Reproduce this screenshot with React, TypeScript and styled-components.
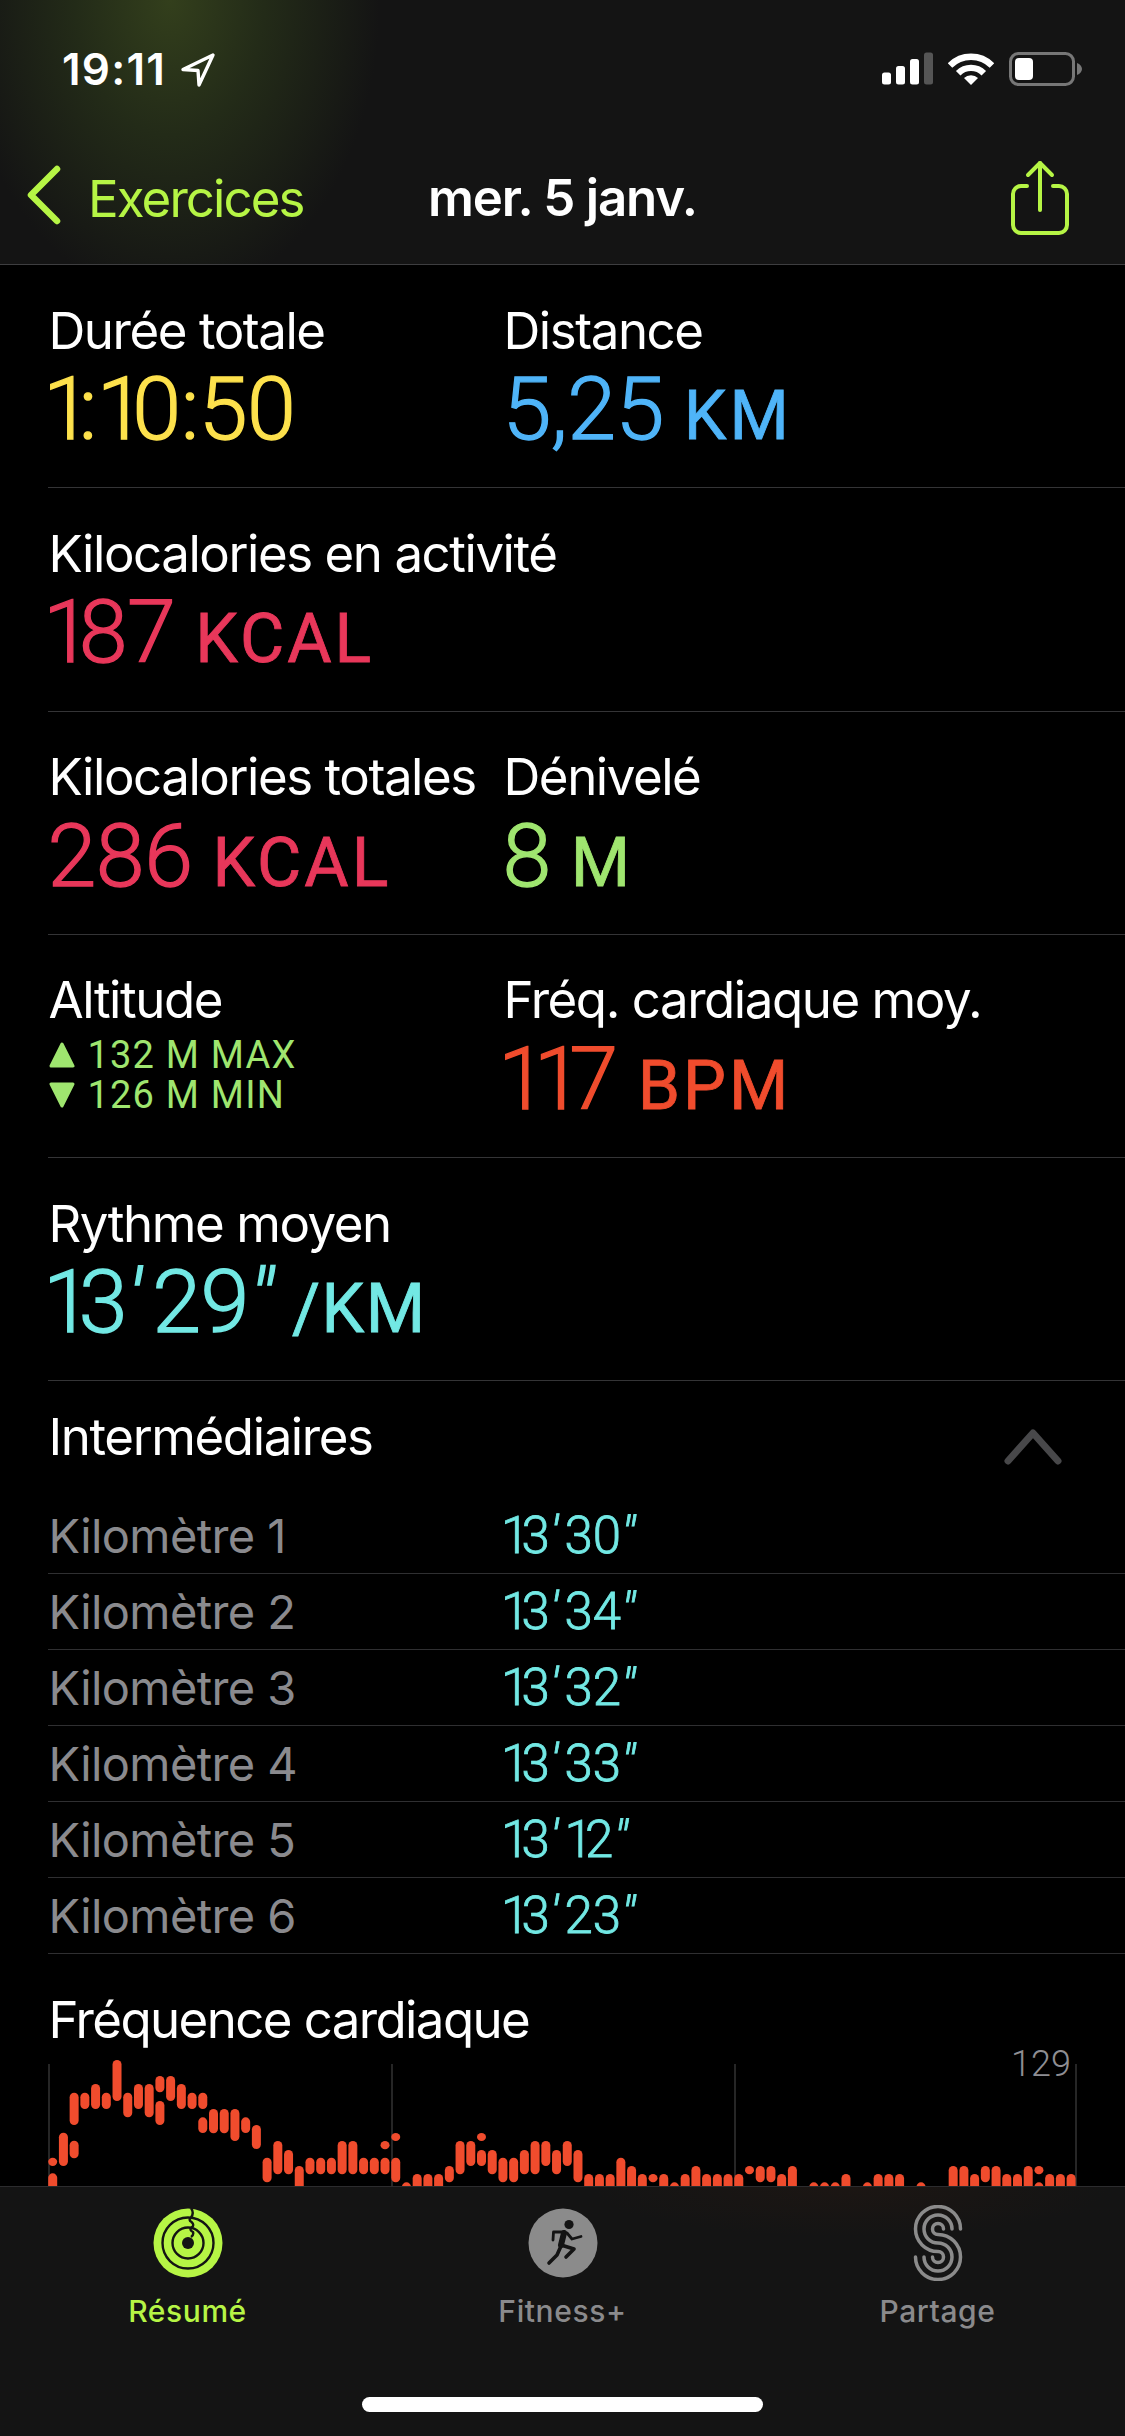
import React from "react";
import styled, { createGlobalStyle } from "styled-components";

const LIME = "#b6f545";
const GREEN = "#9fe56f";
const CYAN = "#72e8e4";
const RED = "#e8375a";
const TEXT_FONT = `"Inter", "Liberation Sans", sans-serif`;
const NUM_FONT = `"Roboto", "Inter", sans-serif`;

const Global = createGlobalStyle`
  html, body { margin: 0; padding: 0; background: #000; }
  body { font-family: ${TEXT_FONT}; -webkit-font-smoothing: antialiased; }
`;

const Page = styled.div`
  width: 1125px;
  height: 2436px;
  display: flex;
  flex-direction: column;
  overflow: hidden;
  background: #000;
  color: #fff;
`;

const Header = styled.header`
  height: 265px;
  flex: none;
  box-sizing: border-box;
  border-bottom: 1.5px solid #3e3e40;
  background: radial-gradient(ellipse 210px 300px at 170px 0, #333f1c 0%, #232b18 45%, rgba(20, 20, 20, 0) 100%), #141414;
`;

const StatusBar = styled.div`
  height: 135px;
  display: flex;
  justify-content: space-between;
  align-items: flex-start;
  padding: 52px 43px 0 62px;
  box-sizing: border-box;
`;

const StatusLeft = styled.div`
  display: flex;
  align-items: flex-start;
  gap: 14px;
`;

const Time = styled.span`
  font-size: 44px;
  line-height: 34px;
  font-weight: 600;
  letter-spacing: 1.2px;
`;

const StatusRight = styled.div`
  display: flex;
  align-items: flex-start;
  gap: 15px;
`;

const NavRow = styled.nav`
  display: grid;
  grid-template-columns: 1fr auto 1fr;
  align-items: flex-start;
`;

const BackLink = styled.div`
  display: flex;
  align-items: flex-start;
  gap: 26px;
  padding-left: 26px;
  color: ${LIME};
  font-size: 51px;
  line-height: 60px;
  letter-spacing: -1.9px;
`;

const NavTitle = styled.h1`
  margin: 0;
  font-size: 51px;
  line-height: 60px;
  font-weight: 600;
  letter-spacing: -1.2px;
  padding-top: 33px;
`;

const BackLabel = styled.span`
  padding-top: 34px;
`;

const ShareButton = styled.div`
  display: flex;
  justify-content: flex-end;
  padding: 25px 55px 0 0;
`;

const BackIcon = styled.svg`
  margin-top: 30px;
`;

const Main = styled.main`
  flex: 1;
  min-height: 0;
  overflow: hidden;
  background: #000;
`;

const MetricRow = styled.section`
  height: 223.3px;
  box-sizing: border-box;
  margin-left: 48px;
  padding: 35.5px 0 0 0.5px;
  border-bottom: 1.5px solid #343436;
  display: grid;
  grid-template-columns: 455px 1fr;
`;

const Label = styled.div`
  font-size: 51px;
  line-height: 60px;
  letter-spacing: -1.45px;
  white-space: nowrap;
`;

const Value = styled.div<{ $color: string }>`
  color: ${(p) => p.$color};
  font-family: ${NUM_FONT};
  font-size: 88px;
  line-height: 90px;
  font-weight: 300;
  -webkit-text-stroke: 1.3px ${(p) => p.$color};
  margin: 3.5px 0 0 -1px;
  letter-spacing: -0.5px;
  white-space: nowrap;
`;

const Unit = styled.span<{ $tight?: boolean }>`
  font-size: 68px;
  font-weight: 400;
  -webkit-text-stroke-width: 0.8px;
  letter-spacing: ${(p) => (p.$tight ? "1.5px" : "3px")};
  margin-left: ${(p) => (p.$tight ? "8px" : "20px")};
`;

const One = styled.span<{ $first?: boolean }>`
  letter-spacing: -0.15em;
  margin-left: ${(p) => (p.$first ? "-0.05em" : "0")};
`;

const Prime = styled.span`
  font-style: italic;
  letter-spacing: 0.12em;
`;

const AltitudeList = styled.div`
  margin-top: 5px;
  display: flex;
  flex-direction: column;
`;

const AltitudeLine = styled.div`
  display: flex;
  align-items: center;
  gap: 13px;
  color: ${GREEN};
  font-family: ${NUM_FONT};
  font-size: 38px;
  line-height: 40px;
  letter-spacing: 1.2px;
`;

const SplitsHeader = styled.div`
  height: 116.5px;
  box-sizing: border-box;
  padding: 26px 63px 0 48.5px;
  display: flex;
  justify-content: space-between;
  align-items: flex-start;
`;

const SplitsTitle = styled.div`
  font-size: 51px;
  line-height: 60px;
  letter-spacing: -1.4px;
`;

const Chevron = styled.svg`
  margin-top: 22px;
`;

const SplitRow = styled.div`
  height: 76px;
  box-sizing: border-box;
  margin-left: 48px;
  padding-left: 0.5px;
  border-bottom: 1.5px solid #2f2f31;
  display: grid;
  grid-template-columns: 455px 1fr;
  align-items: center;
  font-size: 47px;
`;

const SplitName = styled.span`
  color: #8a8a8e;
  letter-spacing: -0.6px;
`;

const SplitTime = styled.span`
  color: ${CYAN};
  font-family: ${NUM_FONT};
  font-size: 51px;
  font-weight: 300;
  -webkit-text-stroke: 0.8px ${CYAN};
`;

const HeartTitle = styled.div`
  padding: 36px 0 0 48.5px;
  font-size: 51px;
  line-height: 60px;
  letter-spacing: -1.6px;
`;

const Chart = styled.div`
  position: relative;
  height: 136px;
`;

const ChartMax = styled.span`
  position: absolute;
  right: 54px;
  top: -6px;
  color: #8e8e93;
  font-family: ${NUM_FONT};
  font-size: 36px;
  line-height: 40px;
  font-weight: 300;
`;

const ChartSvg = styled.svg`
  display: block;
`;

const TabBar = styled.footer`
  height: 250px;
  flex: none;
  box-sizing: border-box;
  border-top: 1.5px solid #2c2c2e;
  background: radial-gradient(ellipse 260px 50px at 850px 0, #1c1613 0%, rgba(20, 20, 20, 0) 100%), #141414;
  display: flex;
  flex-direction: column;
`;

const Tabs = styled.div`
  display: grid;
  grid-template-columns: repeat(3, 375px);
  padding-top: 18px;
`;

const Tab = styled.div<{ $active?: boolean }>`
  display: flex;
  flex-direction: column;
  align-items: center;
  color: ${(p) => (p.$active ? LIME : "#8a8a8c")};
  font-size: 30px;
  line-height: 36px;
  font-weight: 500;
  letter-spacing: 0.6px;
`;

const TabIcon = styled.div`
  height: 76px;
  display: flex;
  align-items: center;
  justify-content: center;
  margin-bottom: 12px;
`;

const HomeBar = styled.div`
  width: 401px;
  height: 15px;
  border-radius: 8px;
  background: #fff;
  margin: auto auto 24px;
`;

const numerals = (text: string) =>
  Array.from(text).map((c, i) => {
    if (c === "1") return <One key={i} $first={i === 0}>1</One>;
    if (c === "′" || c === "″") return <Prime key={i}>{c}</Prime>;
    return c;
  });

const LocationIcon = () => (
  <svg width="36" height="36" viewBox="0 0 36 36">
    <path d="M33 3 L3 17.5 L18 18.5 L19 33 Z" fill="none" stroke="#fff" strokeWidth="3.4" strokeLinejoin="round" />
  </svg>
);

const SignalIcon = () => (
  <svg width="51" height="33" viewBox="0 0 51 33">
    <rect x="0" y="20.5" width="9" height="12" rx="2.5" fill="#fff" />
    <rect x="14" y="14" width="9" height="18.5" rx="2.5" fill="#fff" />
    <rect x="28" y="7" width="9" height="25.5" rx="2.5" fill="#fff" />
    <rect x="42" y="0.5" width="9" height="32" rx="2.5" fill="#555" />
  </svg>
);

const WifiIcon = () => (
  <svg width="46" height="33" viewBox="-23 -33 46 33">
    <path d="M-21 -19.5 A29.5 29.5 0 0 1 21 -19.5" fill="none" stroke="#fff" strokeWidth="6.4" />
    <path d="M-12.8 -11.8 A18 18 0 0 1 12.8 -11.8" fill="none" stroke="#fff" strokeWidth="6.4" />
    <path d="M0 0 L-7 -7 A10 10 0 0 1 7 -7 Z" fill="#fff" />
  </svg>
);

const BatteryIcon = () => (
  <svg width="73" height="34" viewBox="0 0 73 34">
    <rect x="1.5" y="1.5" width="63" height="31" rx="8" fill="none" stroke="#777" strokeWidth="3" />
    <rect x="6" y="6" width="18" height="22" rx="4" fill="#fff" />
    <path d="M68 11 C71 12 73 14.5 73 17 C73 19.5 71 22 68 23 Z" fill="#777" />
  </svg>
);

const BackChevron = () => (
  <BackIcon width="36" height="60" viewBox="0 0 36 60">
    <path d="M31 4 L5 30 L31 56" fill="none" stroke={LIME} strokeWidth="6.5" strokeLinecap="round" strokeLinejoin="round" />
  </BackIcon>
);

const ShareIcon = () => (
  <svg width="60" height="76" viewBox="0 0 60 76" fill="none" stroke={LIME} strokeWidth="4" strokeLinecap="round" strokeLinejoin="round">
    <path d="M17 26 H11 A8 8 0 0 0 3 34 V65 A8 8 0 0 0 11 73 H49 A8 8 0 0 0 57 65 V34 A8 8 0 0 0 49 26 H43" />
    <path d="M30 50 V3" />
    <path d="M18 15 L30 3 L42 15" />
  </svg>
);

const Triangle = ({ down }: { down?: boolean }) => (
  <svg width="26" height="26" viewBox="0 0 26 26">
    <path
      d={down ? "M2 2 H24 L13 24 Z" : "M13 2 L24 24 H2 Z"}
      fill={GREEN}
      stroke={GREEN}
      strokeWidth="3"
      strokeLinejoin="round"
    />
  </svg>
);

const ActivityIcon = () => (
  <svg width="70" height="70" viewBox="-35 -35 70 70">
    <circle r="34.5" fill={LIME} />
    <g fill="none" stroke="#141414" strokeWidth="2.4">
      <circle r="25.5" />
      <circle r="15.5" />
      <path d="M3 -35 Q6.5 -30 3 -25.5 Q0 -23 3.5 -21 Q7 -18 3.5 -15.5 Q1 -13 5 -11 Q6 -8 3 -6" />
    </g>
    <circle r="6" fill="#141414" />
  </svg>
);

const FitnessIcon = () => (
  <svg width="70" height="70" viewBox="-35 -35 70 70">
    <circle r="34.5" fill="#8b8b8b" />
    <circle cx="6" cy="-18.5" r="4.6" fill="#141414" />
    <g fill="none" stroke="#141414" strokeLinecap="round" strokeLinejoin="round">
      <path d="M1 -10 L-2 2" strokeWidth="6" />
      <path d="M1 -11 H-9.5 L-10 -3" strokeWidth="2.8" />
      <path d="M4 -10 L9 -4 L18 -6.5" strokeWidth="2.8" />
      <path d="M-2 2 L11 6 L3 14" strokeWidth="3.6" />
      <path d="M-2 3 L-6 12 L-14 20" strokeWidth="3.6" />
    </g>
  </svg>
);

const sLine = (d: number) => {
  const r0 = 14;
  const top = r0 + d;
  const bottom = r0 - d;
  return `M${top} -${r0} A${top} ${top} 0 1 0 0 ${d} A${bottom} ${bottom} 0 1 1 ${-bottom} ${r0}`;
};

const SharingIcon = () => (
  <svg width="50" height="76" viewBox="-25 -38 50 76">
    <g fill="none" stroke="#8b8b8b" strokeWidth="3.5" strokeLinecap="round">
      <path d={sLine(8.5)} />
      <path d={sLine(0)} />
      <path d={sLine(-8.5)} />
    </g>
  </svg>
);

type Segment = [number, number];
const COLUMNS: Segment[][] = [
  [[353, 378], [400, 470]],
  [[278, 378]],
  [[158, 255], [302, 355]],
  [[158, 207]],
  [[132, 207]],
  [[158, 207]],
  [[60, 183]],
  [[158, 232]],
  [[132, 207]],
  [[132, 232]],
  [[108, 157], [183, 255]],
  [[108, 183]],
  [[132, 207]],
  [[158, 207]],
  [[158, 207], [232, 279]],
  [[207, 280]],
  [[207, 280]],
  [[207, 303]],
  [[232, 279]],
  [[255, 327]],
  [[353, 427]],
  [[303, 403]],
  [[330, 403]],
  [[378, 470]],
  [[353, 403]],
  [[353, 403]],
  [[353, 403]],
  [[303, 403]],
  [[303, 403]],
  [[353, 403]],
  [[353, 403]],
  [[303, 328], [353, 403]],
  [[279, 303], [353, 427]],
  [[427, 470]],
  [[402, 470]],
  [[402, 470]],
  [[402, 470]],
  [[378, 427]],
  [[303, 403]],
  [[303, 378]],
  [[279, 303], [330, 378]],
  [[330, 403]],
  [[353, 427]],
  [[353, 427]],
  [[330, 403]],
  [[303, 403]],
  [[303, 378]],
  [[330, 403]],
  [[303, 378]],
  [[330, 427]],
  [[402, 470]],
  [[402, 470]],
  [[402, 470]],
  [[353, 470]],
  [[378, 470]],
  [[402, 470]],
  [[402, 427]],
  [[402, 470]],
  [[427, 470]],
  [[402, 470]],
  [[378, 470]],
  [[402, 470]],
  [[402, 470]],
  [[402, 470]],
  [[402, 470]],
  [[378, 403]],
  [[378, 427]],
  [[378, 427]],
  [[402, 470]],
  [[378, 470]],
  [],
  [[427, 470]],
  [[427, 470]],
  [[427, 470]],
  [[402, 470]],
  [],
  [[427, 470]],
  [[402, 470]],
  [[402, 470]],
  [[402, 470]],
  [],
  [[427, 470]],
  [],
  [],
  [[378, 470]],
  [[378, 470]],
  [[402, 470]],
  [[378, 427]],
  [[378, 470]],
  [[402, 470]],
  [[402, 470]],
  [[378, 470]],
  [[378, 403], [427, 470]],
  [[402, 470]],
  [[402, 470]],
  [[402, 470]],
];

const HeartChart = () => (
  <ChartSvg width="1125" height="136" viewBox="0 2050 1125 136">
    {[49, 392, 735, 1076].map((x) => (
      <line key={x} x1={x} x2={x} y1="2064" y2="2186" stroke="#333" strokeWidth="1.5" />
    ))}
    {COLUMNS.map((segments, n) =>
      segments.map(([top, bottom]) => (
        <rect
          key={`${n}-${top}`}
          x={52.7 + n * 10.72 - 4.5}
          y={2040 + top / 3}
          width="9"
          height={(bottom - top) / 3}
          rx="4.5"
          fill="#f04c2d"
        />
      ))
    )}
  </ChartSvg>
);

const SPLITS = ["13′30″", "13′34″", "13′32″", "13′33″", "13′12″", "13′23″"];

export default function App() {
  return (
    <Page>
      <Global />
      <Header>
        <StatusBar>
          <StatusLeft>
            <Time>19:11</Time>
            <LocationIcon />
          </StatusLeft>
          <StatusRight>
            <SignalIcon />
            <WifiIcon />
            <BatteryIcon />
          </StatusRight>
        </StatusBar>
        <NavRow>
          <BackLink>
            <BackChevron />
            <BackLabel>Exercices</BackLabel>
          </BackLink>
          <NavTitle>mer. 5 janv.</NavTitle>
          <ShareButton>
            <ShareIcon />
          </ShareButton>
        </NavRow>
      </Header>
      <Main>
        <MetricRow>
          <div>
            <Label>Durée totale</Label>
            <Value $color="#fde14c">{numerals("1:10:50")}</Value>
          </div>
          <div>
            <Label>Distance</Label>
            <Value $color="#4fb4f8">
              5,25<Unit>KM</Unit>
            </Value>
          </div>
        </MetricRow>
        <MetricRow>
          <div>
            <Label>Kilocalories en activité</Label>
            <Value $color={RED}>
              {numerals("187")}
              <Unit>KCAL</Unit>
            </Value>
          </div>
        </MetricRow>
        <MetricRow>
          <div>
            <Label>Kilocalories totales</Label>
            <Value $color={RED}>
              286<Unit>KCAL</Unit>
            </Value>
          </div>
          <div>
            <Label>Dénivelé</Label>
            <Value $color={GREEN}>
              8<Unit>M</Unit>
            </Value>
          </div>
        </MetricRow>
        <MetricRow>
          <div>
            <Label>Altitude</Label>
            <AltitudeList>
              <AltitudeLine>
                <Triangle />
                132 M MAX
              </AltitudeLine>
              <AltitudeLine>
                <Triangle down />
                126 M MIN
              </AltitudeLine>
            </AltitudeList>
          </div>
          <div>
            <Label>Fréq. cardiaque moy.</Label>
            <Value $color="#f04c2d">
              {numerals("117")}
              <Unit>BPM</Unit>
            </Value>
          </div>
        </MetricRow>
        <MetricRow>
          <div>
            <Label>Rythme moyen</Label>
            <Value $color={CYAN}>
              {numerals("13′29″")}
              <Unit $tight>/KM</Unit>
            </Value>
          </div>
        </MetricRow>
        <SplitsHeader>
          <SplitsTitle>Intermédiaires</SplitsTitle>
          <Chevron width="58" height="36" viewBox="0 0 58 36">
            <path d="M4 32 L29 4 L54 32" fill="none" stroke="#48484a" strokeWidth="7" strokeLinecap="round" strokeLinejoin="round" />
          </Chevron>
        </SplitsHeader>
        {SPLITS.map((time, i) => (
          <SplitRow key={time}>
            <SplitName>Kilomètre {i + 1}</SplitName>
            <SplitTime>{numerals(time)}</SplitTime>
          </SplitRow>
        ))}
        <HeartTitle>Fréquence cardiaque</HeartTitle>
        <Chart>
          <ChartMax>129</ChartMax>
          <HeartChart />
        </Chart>
      </Main>
      <TabBar>
        <Tabs>
          <Tab $active>
            <TabIcon>
              <ActivityIcon />
            </TabIcon>
            Résumé
          </Tab>
          <Tab>
            <TabIcon>
              <FitnessIcon />
            </TabIcon>
            Fitness+
          </Tab>
          <Tab>
            <TabIcon>
              <SharingIcon />
            </TabIcon>
            Partage
          </Tab>
        </Tabs>
        <HomeBar />
      </TabBar>
    </Page>
  );
}
